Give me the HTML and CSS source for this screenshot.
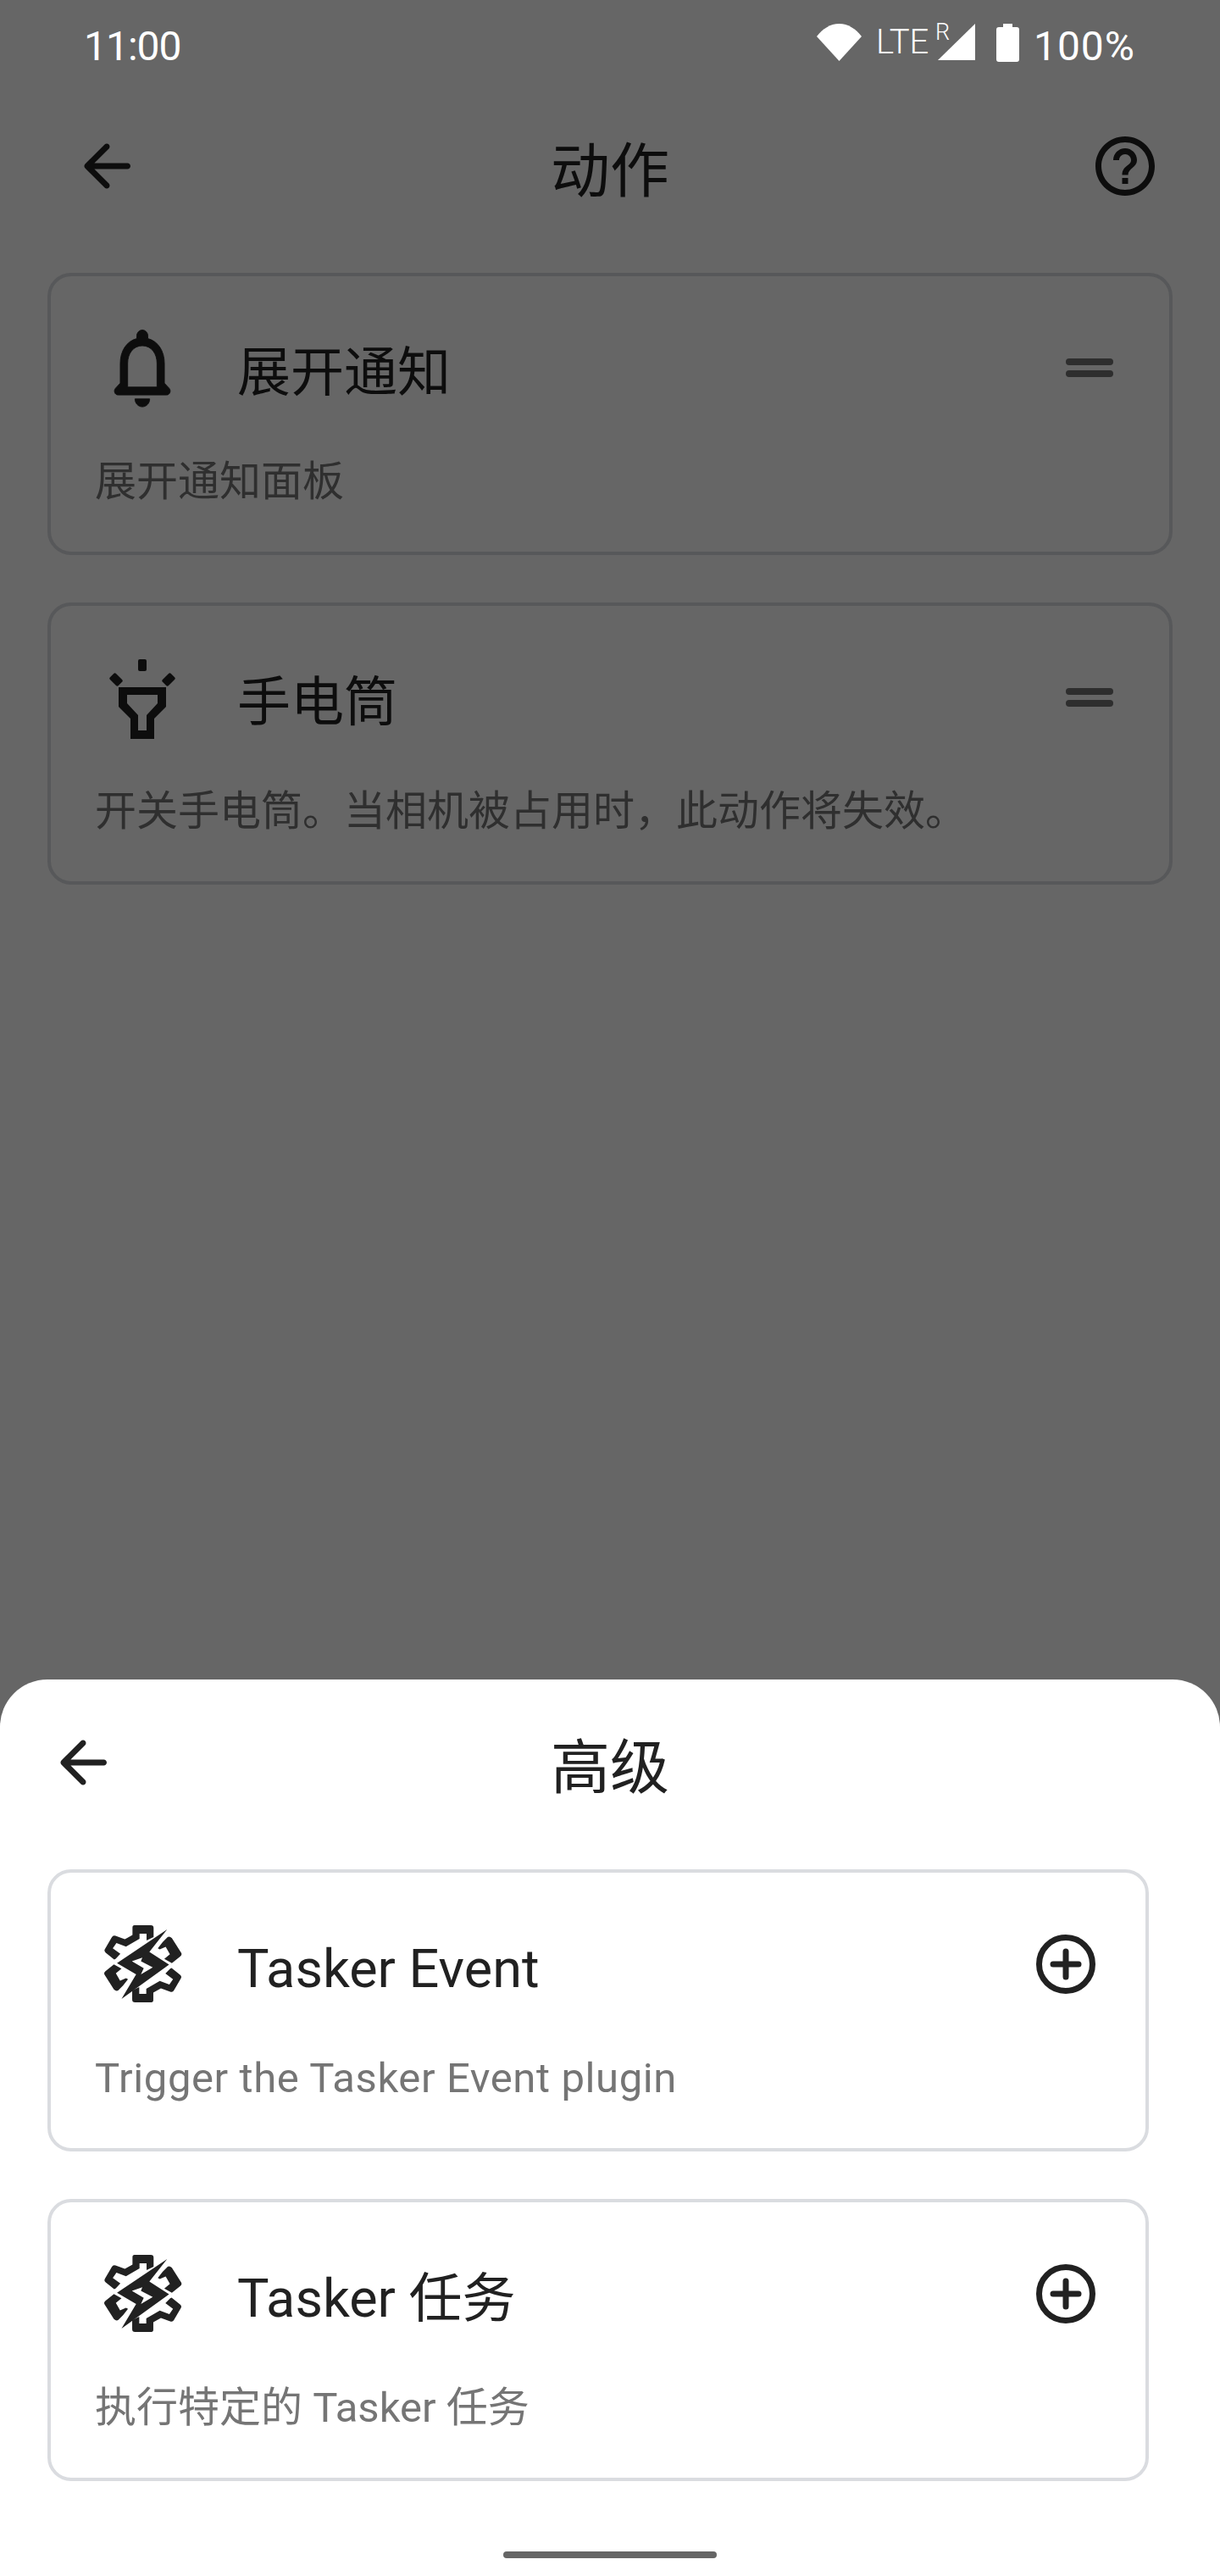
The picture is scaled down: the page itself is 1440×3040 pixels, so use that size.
FILE: index.html
```html
<!DOCTYPE html>
<html>
<head>
<meta charset="utf-8">
<title>动作</title>
<link rel="stylesheet" href="styles.css">
</head>
<body>
<svg class="defs" width="0" height="0">
	<defs>
		<g id="gear">
			<g id="gear_half">
				<path d="M122 30H180Q190 30 190 40V72L165 84V60H140V78L92 106 58 93 45 112 72 132 55 150 50 152 20 128Q13 122 17 115L42 72Q46 65 55 68L88 80 115 65V38Q115 30 122 30Z"/>
				<path d="M222 90L240 72Q247 68 255 76L288 128Q292 135 285 141L255 165 228 150 248 133 233 107 212 116 205 112Z"/>
			</g>
			<use href="#gear_half" transform="rotate(180 152 167)"/>
			<path fill-rule="evenodd" d="M238 45L60 165 128 205 76 292 245 170 175 125ZM150 145L113 158 155 183 145 205 187 180 145 158Z"/>
		</g>
	</defs>
</svg>

<div class="phone">
	<div class="statusbar">
		<span class="clock">11:00</span>
		<div class="status_right">
			<svg class="wifi" viewBox="0 0 53 44"><path d="M0 15C7 6 16 0 26.500 0S46 6 53 15L26.500 44z"/></svg>
			<span class="lte">LTE</span>
			<span class="roam">R</span>
			<svg class="signal" viewBox="0 0 44 43"><path d="M44 0v43H0z"/></svg>
			<svg class="battery" viewBox="0 0 27 45"><path d="M8 0h11v4h5a3 3 0 0 1 3 3v35a3 3 0 0 1-3 3H3a3 3 0 0 1-3-3V7a3 3 0 0 1 3-3h5z"/></svg>
			<span class="percent">100%</span>
		</div>
	</div>

	<div class="header">
		<svg class="icon84" viewBox="0 0 24 24"><path d="M19 11H7.830l4.880-4.880c.39-.39.39-1.030 0-1.420-.39-.39-1.020-.39-1.410 0l-6.590 6.590c-.39.39-.39 1.020 0 1.410l6.590 6.590c.39.39 1.020.39 1.410 0 .39-.39.39-1.020 0-1.410L7.830 13H19c.55 0 1-.45 1-1s-.45-1-1-1z"/></svg>
		<div class="header_title">动作</div>
		<svg class="icon84" viewBox="0 0 24 24"><path d="M11 18h2v-2h-2v2zm1-16C6.480 2 2 6.480 2 12s4.480 10 10 10 10-4.480 10-10S17.520 2 12 2zm0 18c-4.410 0-8-3.590-8-8s3.590-8 8-8 8 3.590 8 8-3.590 8-8 8zm0-14c-2.210 0-4 1.790-4 4h2c0-1.100.9-2 2-2s2 .9 2 2c0 2-3 1.750-3 5h2c0-2.250 3-2.500 3-5 0-2.210-1.790-4-4-4z"/></svg>
	</div>

	<div class="list">
		<div class="card">
			<div class="card_top">
				<div class="card_icon">
					<svg class="bell" viewBox="3.700 2.200 16.600 20" preserveAspectRatio="none"><path d="M19.290 17.290L18 16v-5c0-3.070-1.640-5.640-4.500-6.320V4c0-.83-.67-1.500-1.500-1.500s-1.500.67-1.500 1.500v.68C7.630 5.360 6 7.920 6 11v5l-1.290 1.290c-.63.63-.19 1.710.7 1.710h13.170c.9 0 1.340-1.080.71-1.710zM16 17H8v-6c0-2.480 1.510-4.500 4-4.500s4 2.020 4 4.500v6zm-4 5c1.100 0 2-.9 2-2h-4c0 1.100.9 2 2 2z"/></svg>
				</div>
				<div class="card_title">展开通知</div>
				<div class="drag"><i></i><i></i></div>
			</div>
			<div class="card_sub">展开通知面板</div>
		</div>
		<div class="card">
			<div class="card_top">
				<div class="card_icon">
					<svg class="torch" viewBox="0 0 78 94">
						<rect x="34" y="0" width="10" height="14" rx="2"/>
						<rect x="3" y="17" width="10" height="14" rx="2" transform="rotate(-45 8 24)"/>
						<rect x="65" y="17" width="10" height="14" rx="2" transform="rotate(45 70 24)"/>
						<path fill-rule="evenodd" d="M11 33h56v23L53 70v24H25V70L11 56zm10 9v10l13 14v18h10V66l13-14V42z"/>
					</svg>
				</div>
				<div class="card_title">手电筒</div>
				<div class="drag"><i></i><i></i></div>
			</div>
			<div class="card_sub">开关手电筒。当相机被占用时，此动作将失效。</div>
		</div>
	</div>

	<div class="sheet">
		<div class="sheet_header">
			<svg class="icon84" viewBox="0 0 24 24"><path d="M19 11H7.830l4.880-4.880c.39-.39.39-1.030 0-1.420-.39-.39-1.020-.39-1.410 0l-6.590 6.590c-.39.39-.39 1.020 0 1.410l6.590 6.590c.39.39 1.020.39 1.410 0 .39-.39.39-1.020 0-1.410L7.830 13H19c.55 0 1-.45 1-1s-.45-1-1-1z"/></svg>
			<div class="header_title">高级</div>
		</div>
		<div class="sheet_list">
			<div class="card">
				<div class="card_top">
					<div class="card_icon"><svg class="gear" viewBox="0 0 300 310"><use href="#gear"/></svg></div>
					<div class="card_title"><span class="latin">Tasker Event</span></div>
					<svg class="plus" viewBox="0 0 70 70"><circle cx="35" cy="35" r="31.500"/><path d="M35 20v30M20 35h30"/></svg>
				</div>
				<div class="card_sub card_sub_en">Trigger the Tasker Event plugin</div>
			</div>
			<div class="card">
				<div class="card_top">
					<div class="card_icon"><svg class="gear" viewBox="0 0 300 310"><use href="#gear"/></svg></div>
					<div class="card_title"><span class="latin">Tasker</span> 任务</div>
					<svg class="plus" viewBox="0 0 70 70"><circle cx="35" cy="35" r="31.500"/><path d="M35 20v30M20 35h30"/></svg>
				</div>
				<div class="card_sub">执行特定的 Tasker 任务</div>
			</div>
		</div>
		<div class="handle"></div>
	</div>
</div>
</body>
</html>
```

FILE: styles.css
```css
*{box-sizing:border-box;}
html,body{margin:0;padding:0;}
body{background:#666;font-family:Roboto,"Noto Sans CJK SC",sans-serif;color:#0d0d0d;}
.defs{position:absolute;}
svg{display:block;fill:currentColor;}
.phone{position:relative;width:1440px;height:3040px;overflow:hidden;background:#666;}

.statusbar{height:112px;padding:28px 100px 0 99px;display:flex;justify-content:space-between;align-items:flex-start;color:#fff;}
.clock{font-size:48px;line-height:50px;margin-top:2px;letter-spacing:-1px;font-weight:450;}
.status_right{display:flex;align-items:flex-start;position:relative;}
.wifi{width:53px;height:44px;}
.lte{font-size:40px;line-height:44px;font-weight:300;margin-left:17px;width:71px;}
.roam{position:absolute;left:140px;top:-4px;font-size:27px;line-height:28px;font-weight:300;}
.signal{width:44px;height:43px;margin-left:2px;}
.battery{width:27px;height:45px;margin-left:25px;}
.percent{font-size:48px;line-height:50px;margin-left:17px;margin-top:2px;font-weight:450;letter-spacing:1px;}

.header{height:168px;padding:0 70px 0 84px;display:flex;align-items:center;justify-content:space-between;position:relative;}
.icon84{width:84px;height:84px;}
.header_title{position:absolute;left:0;right:0;text-align:center;font-size:70px;line-height:96px;padding-top:14px;}

.list{padding:42px 56px 0;display:flex;flex-direction:column;gap:56px;}
.card{height:333px;border:4px solid #57585a;border-radius:28px;padding:0 52px 0 52px;}
.card_top{display:flex;align-items:flex-start;height:208px;}
.card_icon{width:116px;height:200px;flex:none;padding-top:63px;}
.card_title{flex:1;font-size:63px;line-height:90px;padding-top:69px;height:160px;margin-left:52px;}
.latin{font-weight:450;}
.drag{width:56px;margin:97px 14px 0 0;}
.drag i{display:block;height:8px;border-radius:4px;background:#2e2e2e;margin-bottom:6px;}
.card_sub{font-size:49px;line-height:70px;color:#2f2f2f;white-space:nowrap;}
.card_sub_en{letter-spacing:.6px;}
.bell{width:72px;height:93px;margin:-1px 0 0 20px;stroke:currentColor;stroke-width:.2;}
.torch{width:78px;height:94px;margin:0 0 0 17px;}

.sheet{position:absolute;left:0;right:0;top:1982px;height:1058px;background:#fff;border-radius:56px 56px 0 0;color:#212121;}
.sheet_header{height:196px;padding:0 0 0 56px;display:flex;align-items:center;position:relative;}
.sheet_list{padding:28px 84px 0 56px;display:flex;flex-direction:column;gap:56px;}
.sheet .card{border-color:#dadce0;}
.sheet .card_sub{color:#757575;}
.gear{width:100px;height:103px;margin:-11px 0 0 6px;}
.plus{width:70px;height:70px;flex:none;margin:73px 7px 0 0;fill:none;stroke:currentColor;stroke-width:7;stroke-linecap:round;}
.handle{position:absolute;left:594px;top:1029px;width:252px;height:8px;border-radius:4px;background:#666;}
```
